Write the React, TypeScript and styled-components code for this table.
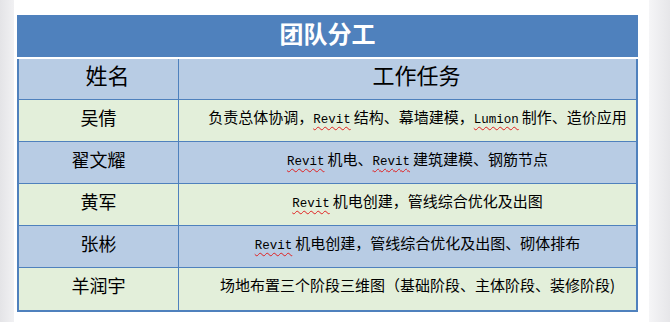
import React from "react";
import styled, { createGlobalStyle } from "styled-components";

const Global = createGlobalStyle`
  html, body { margin: 0; padding: 0; background: #ffffff; }
  body { font-family: "Noto Sans CJK SC", "Noto Sans", sans-serif; }
`;

const Page = styled.div`
  display: flex;
  width: 670px;
  height: 322px;
  overflow: hidden;
`;

const SideLeft = styled.div`
  width: 14px;
  background: linear-gradient(to right, #e4e4e7, #f1f1f3);
`;

const SideRight = styled.div`
  width: 21px;
  background: linear-gradient(to right, #f5f5f7, #e6e6e9);
`;

const Sheet = styled.div`
  width: 635px;
  background: #ffffff;
  padding: 15px 0 0 3px;
  box-sizing: border-box;
`;

const Table = styled.div`
  width: 621px;
  display: flex;
  flex-direction: column;
  gap: 2px;
`;

const Title = styled.div`
  height: 42px;
  background: #4f81bd;
  color: #ffffff;
  font-size: 24px;
  font-weight: 700;
  text-align: center;
  line-height: 35px;
`;

const Grid = styled.div`
  display: grid;
  grid-template-columns: 160px 1fr;
  border: 2px solid #4f81bd;
  border-top: none;
`;

const Cell = styled.div<{ $tone: "blue" | "green"; $head?: boolean; $last?: boolean; $first?: boolean }>`
  height: ${(p) => (p.$head ? 41 : 42)}px;
  box-sizing: border-box;
  background: ${(p) => (p.$tone === "blue" ? "#b8cce4" : "#e3efda")};
  border-bottom: ${(p) => (p.$last ? "none" : "1px solid #4f81bd")};
  border-right: ${(p) => (p.$first ? "1px solid #4f81bd" : "none")};
  color: #000;
  font-weight: 400;
  text-align: center;
  white-space: nowrap;
  font-size: ${(p) => (p.$head ? 22 : p.$first ? 18 : 15)}px;
  line-height: ${(p) => (p.$head ? 30 : 34)}px;
  padding-left: ${(p) => (p.$head ? 18 : p.$first ? 0 : 20)}px;
`;

const Latin = styled.span<{ $wavy?: boolean }>`
  font-family: "Liberation Mono", "DejaVu Sans Mono", monospace;
  font-size: 12.5px;
  margin-right: 3px;
  text-decoration: ${(p) => (p.$wavy ? "underline wavy #e02020" : "none")};
  text-decoration-thickness: 1px;
  text-underline-offset: 3px;
`;

const rows: { name: string; task: React.ReactNode }[] = [
  {
    name: "吴倩",
    task: (
      <>
        负责总体协调，<Latin $wavy>Revit</Latin>结构、幕墙建模，<Latin $wavy>Lumion</Latin>制作、造价应用
      </>
    ),
  },
  {
    name: "翟文耀",
    task: (
      <>
        <Latin $wavy>Revit</Latin>机电、<Latin $wavy>Revit</Latin>建筑建模、钢筋节点
      </>
    ),
  },
  {
    name: "黄军",
    task: (
      <>
        <Latin $wavy>Revit</Latin>机电创建，管线综合优化及出图
      </>
    ),
  },
  {
    name: "张彬",
    task: (
      <>
        <Latin $wavy>Revit</Latin>机电创建，管线综合优化及出图、砌体排布
      </>
    ),
  },
  {
    name: "羊润宇",
    task: <>场地布置三个阶段三维图（基础阶段、主体阶段、装修阶段)</>,
  },
];

export default function App() {
  return (
    <>
      <Global />
      <Page>
        <SideLeft />
        <Sheet>
          <Table>
            <Title>团队分工</Title>
            <Grid>
              <Cell $tone="blue" $head $first>姓名</Cell>
              <Cell $tone="blue" $head>工作任务</Cell>
              {rows.map((r, i) => {
                const tone = i % 2 === 0 ? "green" : "blue";
                const last = i === rows.length - 1;
                return (
                  <React.Fragment key={r.name}>
                    <Cell $tone={tone} $first $last={last}>{r.name}</Cell>
                    <Cell $tone={tone} $last={last}>{r.task}</Cell>
                  </React.Fragment>
                );
              })}
            </Grid>
          </Table>
        </Sheet>
        <SideRight />
      </Page>
    </>
  );
}
